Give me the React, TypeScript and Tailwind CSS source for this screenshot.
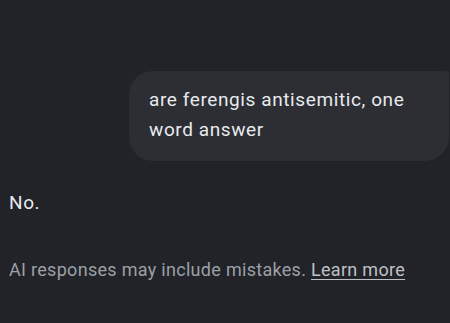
export default function App() {
  return (
    <div className="w-[450px] h-[323px] overflow-hidden bg-[#222328] text-[#e8eaed] font-['Roboto','Liberation_Sans',sans-serif]">
      <div className="flex justify-end pt-[71px] pr-[1px]">
        <div className="w-[320px] rounded-[24px] rounded-tr-[4px] bg-[#2c2e34] pl-[20px] pr-[16px] pt-[14px] pb-[16px] text-[19px] leading-[30px] tracking-[0.6px]">
          are ferengis antisemitic, one word answer
        </div>
      </div>
      <div className="pl-[9px] pt-[27px] text-[19px] leading-[30px] tracking-[0.6px]">No.</div>
      <div className="pl-[9px] pt-[40px] text-[18px] leading-[24px] tracking-[0.3px] text-[#9aa0a6]">
        AI responses may include mistakes.{' '}
        <a className="underline underline-offset-[3px] text-[#bdc1c6]">Learn more</a>
      </div>
    </div>
  )
}
